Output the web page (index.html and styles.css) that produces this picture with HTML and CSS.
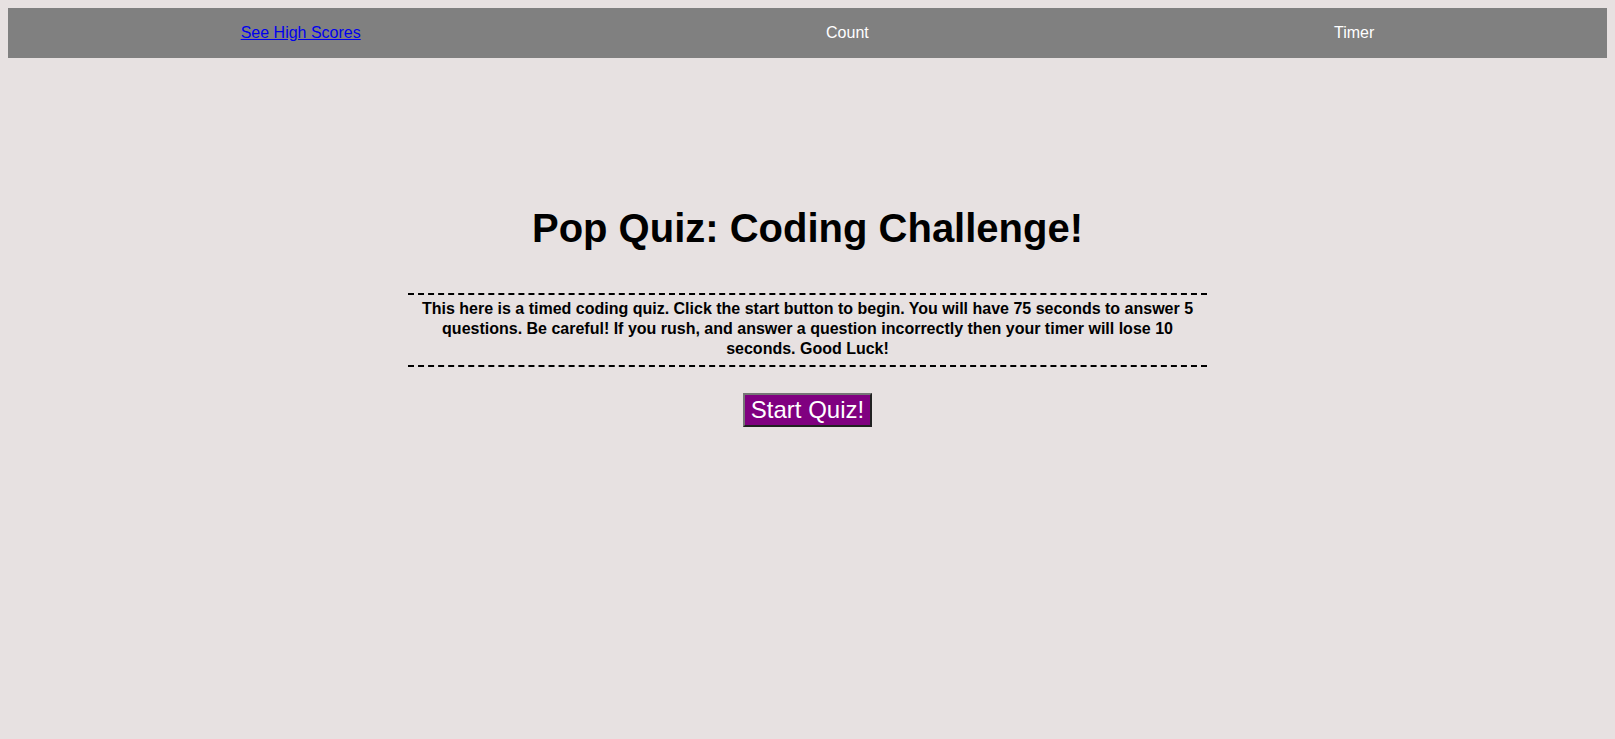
FILE: index.html
```html
<!DOCTYPE html>
<html lang="en">
<head>
<meta charset="utf-8">
<title>Pop Quiz</title>
<link rel="stylesheet" href="styles.css">
</head>
<body>
<header class="topbar">
  <a class="scores-link" href="#">See High Scores</a>
  <span class="topbar-item">Count</span>
  <span class="topbar-item">Timer</span>
</header>
<main class="quiz">
  <h1 class="quiz-title">Pop Quiz: Coding Challenge!</h1>
  <p class="quiz-intro">This here is a timed coding quiz. Click the start button to begin. You will have 75 seconds to answer 5 questions. Be careful! If you rush, and answer a question incorrectly then your timer will lose 10 seconds. Good Luck!</p>
  <button class="start-btn" type="button">Start Quiz!</button>
</main>
</body>
</html>
```
FILE: styles.css
```css
html, body {
  background: #e7e1e1;
}
body {
  margin: 8px;
  font-family: "Liberation Sans", Arial, sans-serif;
}
.topbar {
  display: flex;
  justify-content: space-around;
  align-items: center;
  height: 50px;
  background: #808080;
  color: #ffffff;
  font-size: 16px;
}
.scores-link {
  color: #0000ee;
}
.quiz {
  display: flex;
  flex-direction: column;
  align-items: center;
  padding-top: 147px;
}
.quiz-title {
  margin: 0;
  font-size: 40px;
  line-height: 46px;
}
.quiz-intro {
  width: 50%;
  margin: 42px 0 26px;
  padding: 4px 0 6px;
  border-top: 2px dashed #000;
  border-bottom: 2px dashed #000;
  font-size: 16px;
  font-weight: bold;
  line-height: 20px;
  text-align: center;
}
.start-btn {
  background: #800080;
  color: #ffffff;
  font-family: "Liberation Sans", Arial, sans-serif;
  font-size: 24px;
  border: 2px outset #767676;
  padding: 1px 6px;
}
```
